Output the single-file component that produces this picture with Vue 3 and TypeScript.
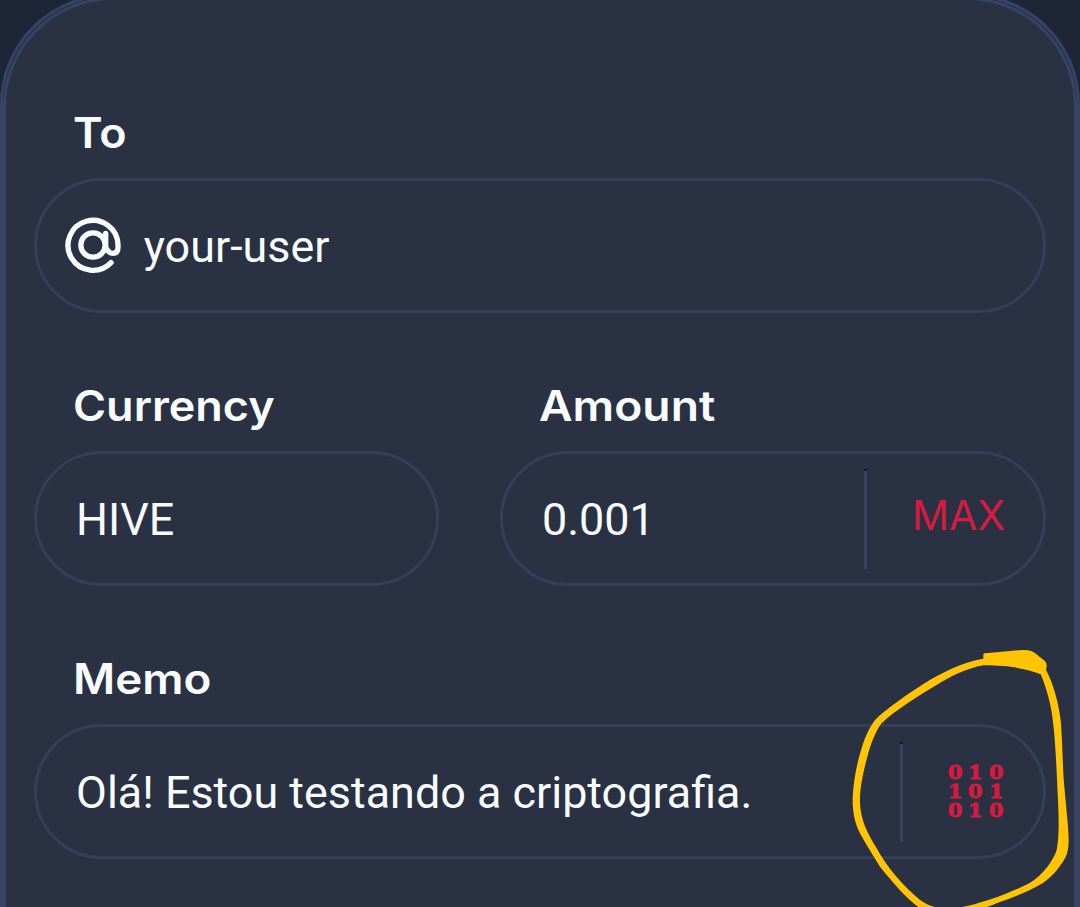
<script setup lang="ts">
import { ref } from 'vue'

// Form values
const to = ref('your-user')
const currency = ref('HIVE')
const amount = ref('0.001')
const memo = ref('Olá! Estou testando a criptografia.')

// Rows of the encryption icon
const bits: string[][] = [
  ['0', '1', '0'],
  ['1', '0', '1'],
  ['0', '1', '0'],
]
</script>

<template>
  <main class="page">
    <div class="card">
      <form class="form" @submit.prevent>
        <div class="group">
          <label class="label label-to" for="to">To</label>
          <div class="field field-icon">
            <svg class="at" viewBox="101 139 176 176" fill="none">
              <circle cx="188" cy="226" r="36.5" />
              <path d="M242 279A75 75 0 1 1 263 226V233Q263 251 248 251Q234 251 226 232V191" />
            </svg>
            <input id="to" v-model="to" class="input" spellcheck="false" />
          </div>
        </div>

        <div class="row">
          <div class="group currency">
            <label class="label label-currency" for="currency">Currency</label>
            <div class="field">
              <input id="currency" v-model="currency" class="input" spellcheck="false" />
            </div>
          </div>
          <div class="group amount">
            <label class="label label-amount" for="amount">Amount</label>
            <div class="field">
              <input id="amount" v-model="amount" class="input" />
              <span class="divider"></span>
              <button type="button" class="max">MAX</button>
            </div>
          </div>
        </div>

        <div class="group">
          <label class="label label-memo" for="memo">Memo</label>
          <div class="field">
            <input id="memo" v-model="memo" class="input" spellcheck="false" />
            <span class="divider"></span>
            <button type="button" class="encrypt">
              <span v-for="(line, i) in bits" :key="i" class="bits">
                <span v-for="(bit, j) in line" :key="j" class="bit">{{ bit }}</span>
              </span>
            </button>
          </div>
        </div>
      </form>
    </div>

    <!-- hand-drawn marker around the encrypt button -->
    <svg class="marker" viewBox="0 0 720 801">
      <path
        fill-rule="evenodd"
        d="M430 42Q432 38 445 39L545 30Q575 28 590 43L600 52Q622 65 620 78L618 90C640 130 656 190 662 240C668 310 668 400 674 450C680 520 686 570 686 600Q686 635 675 655C655 690 630 715 610 728C560 760 480 785 440 801L400 815L250 815L235 801C200 775 160 730 120 680C95 640 70 600 55 570C40 535 38 505 38 475C40 420 53 360 65 325C75 290 90 260 107 238C140 205 200 165 250 132C300 100 370 65 430 56Z
           M602 103C570 90 520 76 430 76C380 85 330 110 290 135C230 170 160 215 125 250C105 275 92 315 82 350C70 395 58 450 60 490C62 540 82 580 110 625C140 680 190 740 240 780Q265 797 285 801L365 801C430 790 520 755 570 728C610 705 640 660 650 630C660 580 655 500 652 440C648 350 644 260 632 200C625 165 612 125 602 103Z"
      />
    </svg>
  </main>
</template>

<style>
body {
  margin: 0;
  background: #1e2536;
}
</style>

<style scoped>
.page {
  position: relative;
  display: flow-root;
  width: 1080px;
  height: 907px;
  overflow: hidden;
  background: #1e2536;
}

.card {
  box-sizing: border-box;
  height: 1030px;
  margin-top: -6px;
  border: 3px solid #364362;
  border-radius: 110px;
  background: #263049;
}

.form {
  box-sizing: border-box;
  height: 100%;
  padding: 103px 28px 0;
  border: 3px solid #364362;
  border-radius: 110px;
  background: #293143;
}

.group {
  margin-bottom: 63px;
}

.row {
  display: flex;
  gap: 61px;
}

.currency {
  width: 405px;
}

.amount {
  flex: 1;
  min-width: 0;
}

/* stretched sideways to get the round, wide letters of the headings */
.label {
  display: block;
  width: max-content;
  margin: 0 0 15px 39px;
  font: 600 42px/60px Inter, sans-serif;
  color: #f8fcff;
  transform: scaleX(1.07);
  transform-origin: 0 50%;
}

.label-amount {
  transform: scaleX(1.1);
}

.label-memo {
  transform: scaleX(1.09);
}

.field {
  box-sizing: border-box;
  display: flex;
  align-items: center;
  height: 135px;
  padding: 0 36px 0 39px;
  border: 3px solid #344059;
  border-radius: 68px;
}

.field-icon {
  gap: 21px;
  padding-left: 27px;
}

.at {
  flex: none;
  width: 58.7px;
  height: 58.7px;
  stroke: #f8fcff;
  stroke-width: 16;
  stroke-linecap: round;
}

.input {
  flex: 1;
  min-width: 0;
  height: 60px;
  padding: 2px 0 0;
  border: 0;
  outline: 0;
  background: none;
  font: 400 44.9px/58px Roboto, sans-serif;
  color: #f8fcff;
}

.divider {
  box-sizing: border-box;
  width: 3px;
  height: 100px;
  border-top: 2px solid #151a28;
  background: #364362;
}

.max,
.encrypt {
  padding: 0;
  border: 0;
  background: none;
  color: #d41b40;
}

.max {
  width: 95px;
  margin: 0 0 8px 45px;
  font: 400 41px/50px Inter, sans-serif;
  text-align: left;
}

.encrypt {
  display: grid;
  grid-template-rows: repeat(3, 19px);
  margin: 0 1px 0 42px;
}

.bits {
  display: grid;
  grid-template-columns: repeat(3, 20.5px);
}

.bit {
  font: 700 18.5px/19px "DejaVu Serif", serif;
  text-align: center;
  -webkit-text-stroke: 0.9px #d41b40;
  transform: scaleX(1.12);
}

.marker {
  position: absolute;
  top: 640px;
  left: 840px;
  width: 240px;
  height: 267px;
  fill: #ffc403;
}
</style>
